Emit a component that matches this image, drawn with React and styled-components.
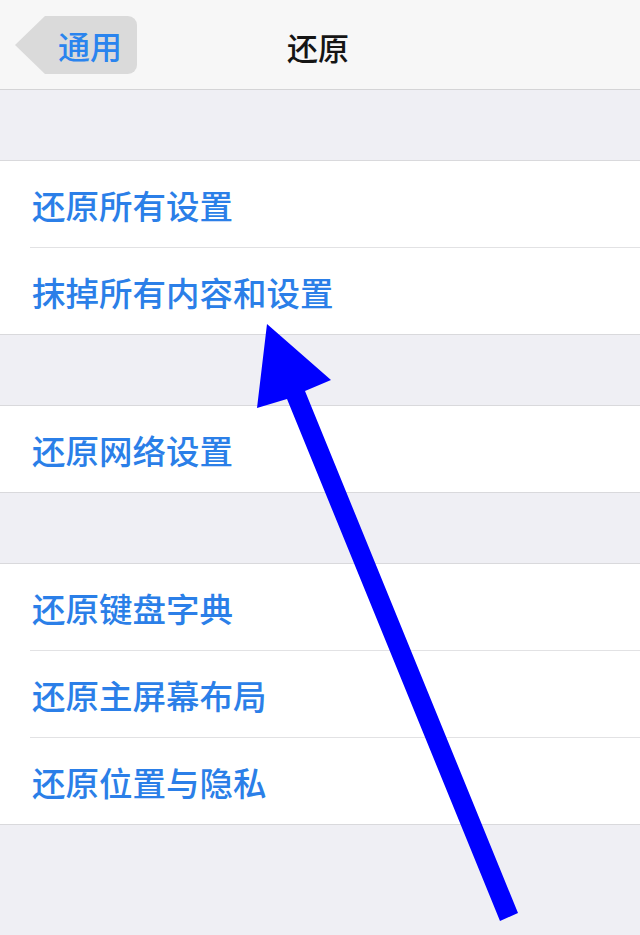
import React from 'react';
import styled, { createGlobalStyle } from 'styled-components';

const GlobalStyle = createGlobalStyle`
  html, body {
    margin: 0;
    padding: 0;
    background: #efeff4;
  }
  body {
    font-family: "Noto Sans CJK SC", "Noto Sans", sans-serif;
  }
`;

const Page = styled.div`
  position: relative;
  width: 640px;
  min-height: 935px;
  background: #efeff4;
  overflow: hidden;
`;

const NavBar = styled.div`
  display: grid;
  grid-template-columns: 1fr auto 1fr;
  align-items: center;
  height: 89px;
  background: #f7f7f7;
  border-bottom: 1px solid #d4d4d6;
`;

const BackButton = styled.button`
  position: relative;
  justify-self: start;
  margin-left: 45px;
  height: 58px;
  padding: 0 15px 0 13px;
  border: none;
  border-radius: 0 9px 9px 0;
  background: #dadada;
  color: #2a84ee;
  font-family: inherit;
  font-size: 32px;
  font-weight: 500;
  line-height: 58px;
  cursor: pointer;

  &::before {
    content: '';
    position: absolute;
    left: -30px;
    top: 0;
    border-top: 29px solid transparent;
    border-bottom: 29px solid transparent;
    border-right: 30px solid #dadada;
  }
`;

const Title = styled.div`
  margin-right: 4px;
  font-size: 31px;
  font-weight: 500;
  color: #151515;
  padding-top: 3px;
`;

const Gap = styled.div`
  height: ${p => p.$h}px;
`;

const Group = styled.div`
  background: #fff;
  border-top: 1px solid #d9d9dc;
  border-bottom: 1px solid #d9d9dc;
`;

const Row = styled.div`
  display: flex;
  align-items: center;
  height: 86px;
  margin-left: 30px;
  padding-left: 2px;
  color: #2b7fe8;
  font-size: 33.5px;
  font-weight: 500;

  &:not(:last-child) {
    border-bottom: 1px solid #e2e2e4;
  }
`;

const Overlay = styled.svg`
  position: absolute;
  left: 0;
  top: 0;
  pointer-events: none;
`;

const groups = [
  ['还原所有设置', '抹掉所有内容和设置'],
  ['还原网络设置'],
  ['还原键盘字典', '还原主屏幕布局', '还原位置与隐私'],
];

function App() {
  return (
    <Page>
      <GlobalStyle />
      <NavBar>
        <BackButton type="button">通用</BackButton>
        <Title>还原</Title>
        <span />
      </NavBar>
      {groups.map((rows, i) => (
        <React.Fragment key={i}>
          <Gap $h={70} />
          <Group>
            {rows.map(label => (
              <Row key={label}>{label}</Row>
            ))}
          </Group>
        </React.Fragment>
      ))}
      <Overlay width="640" height="935" viewBox="0 0 640 935">
        <polygon
          fill="#0000ff"
          points="267,324 331,380 305,391 518,913 500,921 287,399 257,408"
        />
      </Overlay>
    </Page>
  );
}

export default App;
